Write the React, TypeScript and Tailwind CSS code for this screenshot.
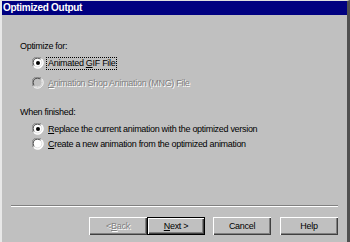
function Radio({ checked, disabled }: { checked?: boolean; disabled?: boolean }) {
  return (
    <svg width="12" height="12" viewBox="0 0 12 12" className="shrink-0">
      <circle cx="6" cy="6" r="5.5" fill={disabled ? "#c0c0c0" : "#ffffff"} />
      <path d="M1.5 9.5 A5.5 5.5 0 0 1 9.5 1.5" fill="none" stroke="#808080" strokeWidth="1" />
      <path d="M2.4 8.6 A4.3 4.3 0 0 1 8.6 2.4" fill="none" stroke="#404040" strokeWidth="1" />
      <path d="M1.5 9.5 A5.5 5.5 0 0 0 9.5 1.5" fill="none" stroke="#ffffff" strokeWidth="1" />
      <path d="M2.4 8.6 A4.3 4.3 0 0 0 8.6 2.4" fill="none" stroke="#dfdfdf" strokeWidth="1" />
      {checked && <circle cx="6" cy="6" r="2" fill="#000000" />}
    </svg>
  );
}

function Option({
  checked,
  disabled,
  focused,
  children,
}: {
  checked?: boolean;
  disabled?: boolean;
  focused?: boolean;
  children: React.ReactNode;
}) {
  return (
    <div className="flex items-center gap-[3px] h-[14px]">
      <Radio checked={checked} disabled={disabled} />
      <span
        className={
          (disabled ? "text-[#808080] [text-shadow:1px_1px_0_#ffffff] " : "text-black ") +
          (focused ? "outline outline-1 outline-dotted outline-black px-[1px] py-[1px]" : "px-[1px]")
        }
      >
        {children}
      </span>
    </div>
  );
}

function Button({
  children,
  disabled,
  isDefault,
}: {
  children: React.ReactNode;
  disabled?: boolean;
  isDefault?: boolean;
}) {
  return (
    <div
      className={
        "w-[58px] h-[18px] flex items-center justify-center bg-[#c0c0c0] " +
        (isDefault
          ? "border border-black shadow-[inset_1px_1px_0_#ffffff,inset_-1px_-1px_0_#404040,inset_-2px_-2px_0_#808080]"
          : "shadow-[inset_1px_1px_0_#ffffff,inset_-1px_-1px_0_#404040,inset_-2px_-2px_0_#808080]") +
        (disabled ? " text-[#808080] [text-shadow:1px_1px_0_#ffffff]" : " text-black")
      }
    >
      {children}
    </div>
  );
}

export default function App() {
  return (
    <div className="w-[350px] h-[242px] bg-[#c0c0c0] border-l-2 border-t border-r-[3px] border-l-[#e8e8e8] border-t-[#dfdfdf] border-r-[#505050] flex flex-col font-['Liberation_Sans',Arial,sans-serif] text-[9px] tracking-[-0.3px] leading-none text-black overflow-hidden">
      {/* title bar */}
      <div className="h-[14px] bg-[#000080] text-white font-bold text-[10px] tracking-[-0.3px] flex items-center pl-[1px]">
        Optimized Output
      </div>

      <div className="flex flex-col pl-[18px] pt-[27px]">
        <p>Optimize for:</p>
        <div className="flex flex-col gap-[6px] pl-[12px] pt-[5px]">
          <Option checked focused>
            Animated <u>G</u>IF File
          </Option>
          <Option disabled>
            <u>A</u>nimation Shop Animation (MNG) File
          </Option>
        </div>

        <p className="pt-[18px]">When finished:</p>
        <div className="flex flex-col gap-[1px] pl-[12px] pt-[5px]">
          <Option checked>
            <u>R</u>eplace the current animation with the optimized version
          </Option>
          <Option>
            <u>C</u>reate a new animation from the optimized animation
          </Option>
        </div>
      </div>

      <div className="mt-auto pb-[7px]">
        <div className="mx-[9px] h-[2px] border-t border-t-[#808080] border-b border-b-white" />
        <div className="flex justify-end pr-[9px] pt-[10px]">
          <Button disabled>
            &lt; <u>B</u>ack
          </Button>
          <Button isDefault>
            <u>N</u>ext &gt;
          </Button>
          <div className="w-[8px]" />
          <Button>Cancel</Button>
          <div className="w-[9px]" />
          <Button>Help</Button>
        </div>
      </div>
    </div>
  );
}
